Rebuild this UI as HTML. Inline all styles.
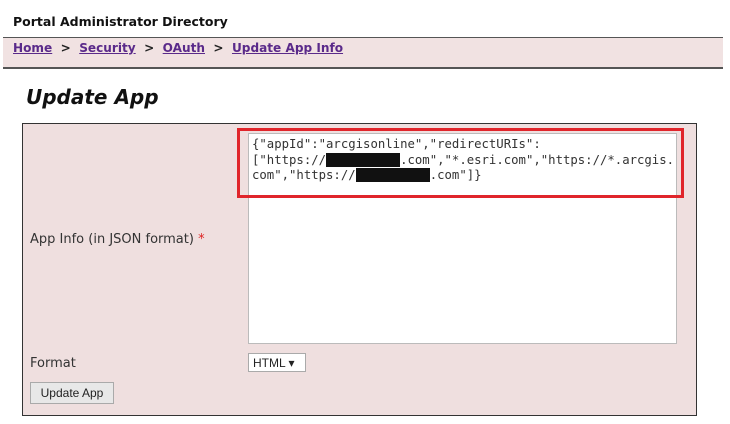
<!DOCTYPE html>
<html><head><style>
body{margin:0;width:730px;height:424px;background:#fff;position:relative;font-family:"DejaVu Sans","Liberation Sans",sans-serif;overflow:hidden}
.a{position:absolute}
a{color:#5a2a8a;text-decoration:underline;font-weight:bold}
</style></head><body>
<div class="a" style="left:13px;top:14px;font-size:12.5px;font-weight:bold;color:#111">Portal Administrator Directory</div>
<div class="a" style="left:3px;top:37px;width:720px;height:29px;background:#f1e2e2;border-top:1px solid #555;border-bottom:2px solid #555"></div>
<div class="a" style="left:13px;top:41px;font-size:12.1px;font-weight:bold;color:#222"><a>Home</a> &nbsp;&gt;&nbsp; <a>Security</a> &nbsp;&gt;&nbsp; <a>OAuth</a> &nbsp;&gt;&nbsp; <a>Update App Info</a></div>
<div class="a" style="left:26px;top:85px;font-size:20px;font-weight:bold;font-style:italic;color:#111">Update App</div>
<div class="a" style="left:22px;top:123px;width:673px;height:291px;background:#efdfdf;border:1px solid #333"></div>
<div class="a" style="left:248px;top:133px;width:427px;height:209px;background:#fff;border:1px solid #bbb"></div>
<div class="a" style="left:252px;top:137px;font-family:'DejaVu Sans Mono','Liberation Mono',monospace;font-size:12.3px;line-height:15.5px;color:#333;white-space:pre">{"appId":"arcgisonline","redirectURIs":
["https://<span style="background:#111">          </span>.com","*.esri.com","https://*.arcgis.
com","https://<span style="background:#111">          </span>.com"]}</div>
<div class="a" style="left:237px;top:128px;width:441px;height:64px;border:3px solid #e0252b"></div>
<div class="a" style="left:30px;top:232px;font-size:13px;color:#333">App Info (in JSON format) <span style="color:#d22">*</span></div>
<div class="a" style="left:30px;top:356px;font-size:13px;color:#333">Format</div>
<div class="a" style="left:248px;top:353px;width:58px;height:19px;background:#fff;border:1px solid #aaa;font-family:'Liberation Sans',sans-serif;font-size:12px;line-height:18px;box-sizing:border-box;padding-left:4px;color:#222">HTML ▾</div>
<div class="a" style="left:30px;top:382px;width:84px;height:22px;background:#e8e8e8;border:1px solid #aaa;box-sizing:border-box;font-family:'Liberation Sans',sans-serif;font-size:12px;line-height:20px;text-align:center;color:#222">Update App</div>
</body></html>
